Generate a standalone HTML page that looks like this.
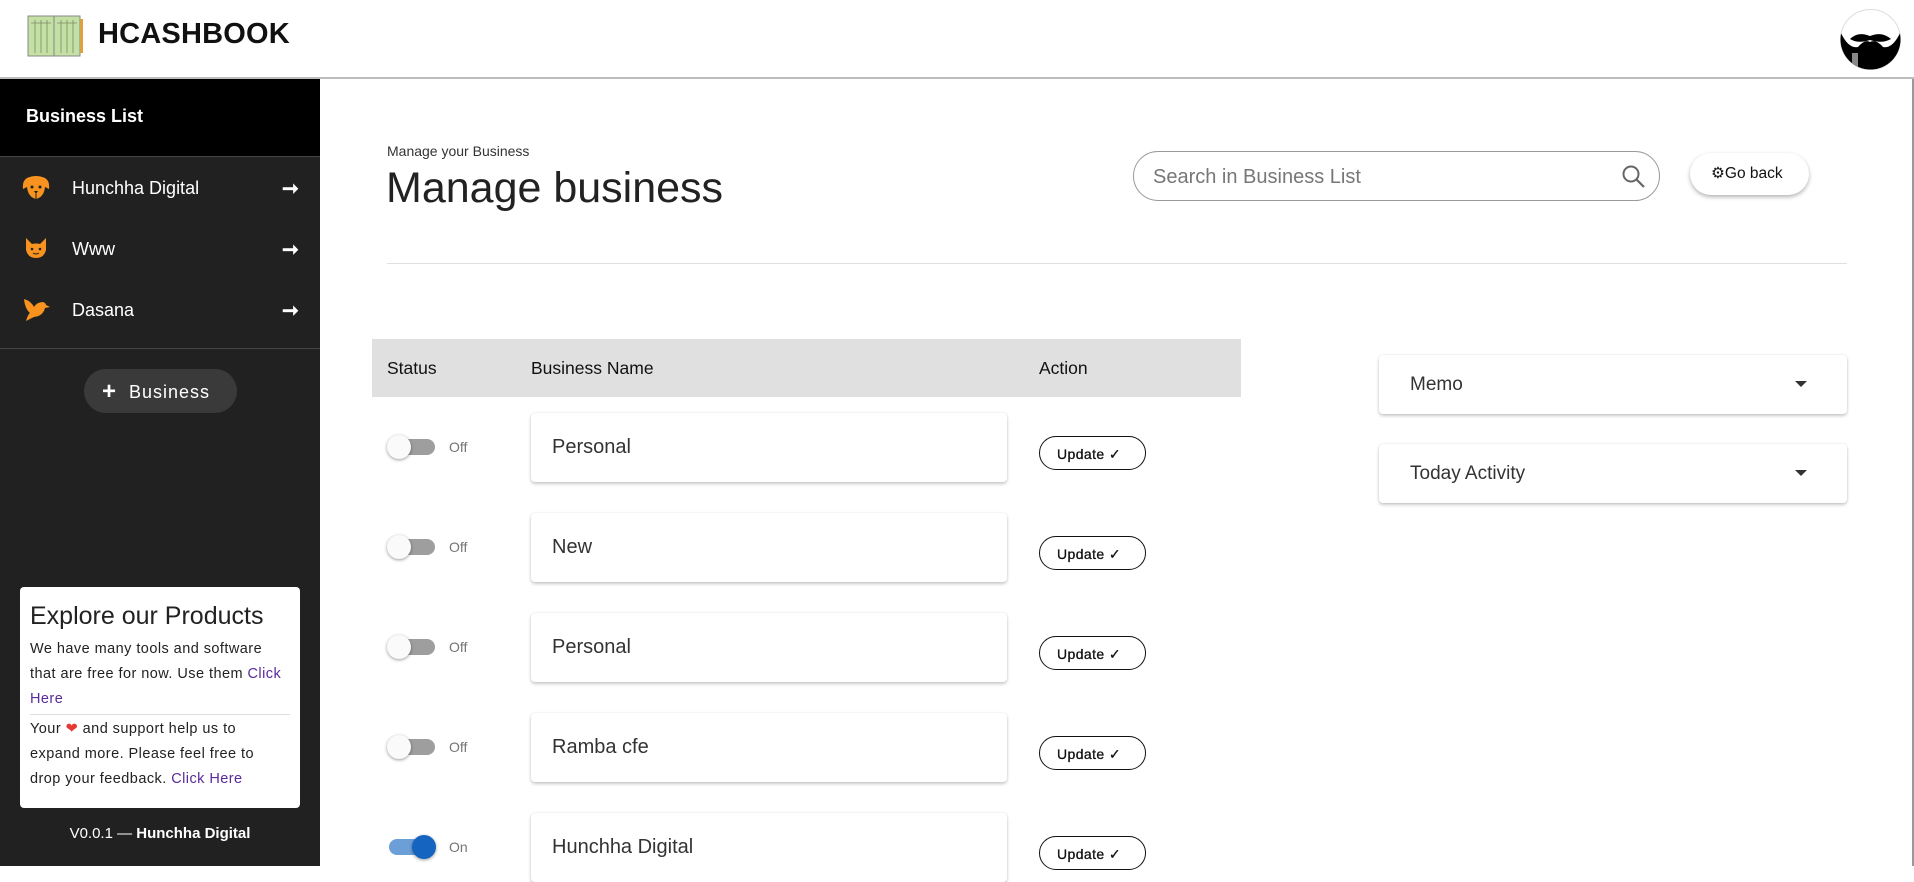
<!DOCTYPE html>
<html><head><meta charset="utf-8"><style>
*{box-sizing:border-box;margin:0;padding:0}
body{width:1914px;height:866px;overflow:hidden;font-family:"Liberation Sans",Arial,sans-serif;background:#fff;position:relative;color:#222}
.abs{position:absolute}
#hdr{left:0;top:0;width:1914px;height:79px;background:#fff;border-bottom:2px solid #bdbdbd}
#side{left:0;top:79px;width:320px;height:787px;background:#212121}
.item{position:absolute;left:0;width:320px;height:40px;color:#fff;font-size:18px}
.item .t{position:absolute;left:72px;top:10px}
.item .ar{position:absolute;left:282px;top:8px;font-size:20px;font-weight:bold}
.item .ic{position:absolute;left:22px;top:7px}
.row .tg{position:absolute;left:389px;width:46px;height:16px;border-radius:8px;background:#9e9e9e}
.row .th{position:absolute;width:24px;height:24px;border-radius:50%;background:#fafafa;box-shadow:0 1px 3px rgba(0,0,0,.4)}
.row .lb{position:absolute;left:449px;font-size:14px;color:#757575}
.row .bx{position:absolute;left:531px;width:476px;height:69px;background:#fff;border-radius:4px;box-shadow:0 2px 3px rgba(0,0,0,.2),0 0 2px rgba(0,0,0,.1);font-size:20px;color:#333;padding:23px 21px}
.row .up{position:absolute;left:1039px;width:107px;height:34px;border:1px solid #111;border-radius:17px;font-size:14px;color:#111;padding:9px 0 0 17px;letter-spacing:.4px;-webkit-text-stroke:.3px #111}
.card{position:absolute;left:1379px;width:468px;height:59px;background:#fff;border-radius:4px;box-shadow:0 2px 3px rgba(0,0,0,.2),0 0 2px rgba(0,0,0,.1);font-size:19px;color:#333;padding:19px 31px}
.card .c{position:absolute;right:40px;top:26px;width:0;height:0;border-left:6px solid transparent;border-right:6px solid transparent;border-top:6px solid #333}
.ex{font-size:14.5px;line-height:25px;letter-spacing:.45px;white-space:nowrap}
</style></head><body>
<div id="hdr" class="abs">
  <svg class="abs" style="left:27px;top:15px" width="57" height="42" viewBox="0 0 57 42">
    <rect x="1" y="1" width="26" height="40" fill="#c4e0a4" stroke="#888"/>
    <rect x="27" y="1" width="26" height="40" fill="#c4e0a4" stroke="#888"/>
    <rect x="53" y="4" width="3" height="34" fill="#e0a040"/>
    <g stroke="#7a8a6a" stroke-width=".8"><line x1="4" y1="8" x2="24" y2="8"/><line x1="30" y1="8" x2="50" y2="8"/><line x1="8" y1="5" x2="8" y2="38"/><line x1="14" y1="5" x2="14" y2="38"/><line x1="20" y1="5" x2="20" y2="38"/><line x1="34" y1="5" x2="34" y2="38"/><line x1="40" y1="5" x2="40" y2="38"/><line x1="46" y1="5" x2="46" y2="38"/></g>
  </svg>
  <div class="abs" style="left:98px;top:18px;font-size:29px;font-weight:900;color:#111;letter-spacing:0.2px">HCASHBOOK</div>
  <svg class="abs" style="left:1840px;top:9px" width="61" height="61" viewBox="0 0 61 61">
    <defs><clipPath id="cc"><circle cx="30.5" cy="30.5" r="30"/></clipPath></defs>
    <circle cx="30.5" cy="30.5" r="30" fill="#fff" stroke="#ddd"/>
    <g clip-path="url(#cc)">
      <path d="M0 22 Q8 40 18 38 Q25 30 30 33 Q36 30 43 38 Q53 40 61 22 L61 61 L0 61Z" fill="#000"/>
      <path d="M10 30 Q18 22 30 27 Q42 22 51 30 Q42 35 30 31 Q18 35 10 30Z" fill="#000"/>
      <rect x="12" y="44" width="6" height="17" fill="#888"/>
    </g>
  </svg>
</div>

<div id="side" class="abs">
  <div class="abs" style="left:0;top:0;width:320px;height:78px;background:#000;border-bottom:1px solid #444"></div>
  <div class="abs" style="left:26px;top:27px;color:#fff;font-size:18px;font-weight:bold">Business List</div>
  <div class="item" style="top:89px"><svg class="ic" width="28" height="26" viewBox="0 0 28 26"><path d="M5 3 Q14 -1 23 3 Q28 6 27 14 L23 12 Q22 22 14 24 Q6 22 5 12 L1 14 Q0 6 5 3Z" fill="#f7931e"/><circle cx="10" cy="12" r="1.5" fill="#222"/><circle cx="18" cy="12" r="1.5" fill="#222"/><path d="M12 16 L16 16 L14 19Z" fill="#222"/><line x1="14" y1="19" x2="14" y2="24" stroke="#222"/></svg><span class="t">Hunchha Digital</span><span class="ar">➞</span></div>
  <div class="item" style="top:150px"><svg class="ic" style="left:23px" width="26" height="24" viewBox="0 0 26 24"><path d="M3 2 L9 8 Q13 7 17 8 L23 2 L23 14 Q21 22 13 22 Q5 22 3 14Z" fill="#f7931e"/><circle cx="9" cy="13" r="1.3" fill="#222"/><circle cx="17" cy="13" r="1.3" fill="#222"/><path d="M10 17 Q13 19 16 17" stroke="#222" fill="none"/></svg><span class="t">Www</span><span class="ar">➞</span></div>
  <div class="item" style="top:211px"><svg class="ic" style="left:23px" width="27" height="24" viewBox="0 0 27 24"><path d="M1 2 Q8 4 11 10 Q14 5 20 5 Q23 6 23 8 L27 10 L22 11 Q20 19 11 20 L3 24 Q5 17 7 16 Q2 12 1 2Z" fill="#f7931e"/></svg><span class="t">Dasana</span><span class="ar">➞</span></div>
  <div class="abs" style="left:0;top:269px;width:320px;height:1px;background:#444"></div>
  <div class="abs" style="left:84px;top:290px;width:153px;height:44px;border-radius:22px;background:#3a3a3a;color:#fff;font-size:18px;padding:8px 0 0 18px;letter-spacing:1px"><span style="font-size:24px;font-weight:bold;position:relative;top:1px">+</span>&nbsp;&nbsp;Business</div>
  <div class="abs" style="left:20px;top:508px;width:280px;height:221px;background:#fff;border-radius:4px;padding:14px 10px;color:#222">
    <div style="font-size:25px;line-height:30px">Explore our Products</div>
    <div class="ex" style="margin-top:6px">We have many tools and software<br>that are free for now. Use them <span style="color:#5a2a9a">Click</span><br><span style="color:#5a2a9a">Here</span></div>
    <div style="height:1px;background:#ddd;margin:2px 0 2px"></div>
    <div class="ex">Your <span style="color:#e53935">❤</span> and support help us to<br>expand more. Please feel free to<br>drop your feedback. <span style="color:#5a2a9a">Click Here</span></div>
  </div>
  <div class="abs" style="left:0;top:746px;width:320px;text-align:center;color:#fff;font-size:15px">V0.0.1 — <b>Hunchha Digital</b></div>
</div>

<div class="abs" style="left:387px;top:143px;font-size:14px;color:#333">Manage your Business</div>
<div class="abs" style="left:386px;top:164px;font-size:43px;color:#222">Manage business</div>
<div class="abs" style="left:1133px;top:151px;width:527px;height:50px;border:1px solid #999;border-radius:25px;padding:14px 19px;font-size:20px;color:#777">Search in Business List
  <svg class="abs" style="left:487px;top:12px" width="26" height="26" viewBox="0 0 26 26"><circle cx="10" cy="10" r="7.5" fill="none" stroke="#666" stroke-width="2"/><line x1="15.5" y1="15.5" x2="23" y2="23" stroke="#666" stroke-width="2.2"/></svg></div>
<div class="abs" style="left:1690px;top:153px;width:119px;height:42px;border-radius:21px;background:#fff;box-shadow:0 2px 4px rgba(0,0,0,.3);font-size:15.5px;color:#111;padding:11px 0 0 21px">⚙Go back</div>
<div class="abs" style="left:387px;top:263px;width:1460px;height:1px;background:#e0e0e0"></div>

<div class="abs" style="left:372px;top:339px;width:869px;height:58px;background:#e0e0e0;font-size:17.5px;color:#111">
  <span class="abs" style="left:15px;top:19px">Status</span><span class="abs" style="left:159px;top:19px">Business Name</span><span class="abs" style="left:667px;top:19px">Action</span>
</div>

<div class="row">
  <div class="tg" style="top:439px"></div><div class="th" style="left:387px;top:435px"></div><div class="lb" style="top:439px">Off</div>
  <div class="bx" style="top:413px">Personal</div><div class="up" style="top:436px">Update ✓</div>
</div>
<div class="row">
  <div class="tg" style="top:539px"></div><div class="th" style="left:387px;top:535px"></div><div class="lb" style="top:539px">Off</div>
  <div class="bx" style="top:513px">New</div><div class="up" style="top:536px">Update ✓</div>
</div>
<div class="row">
  <div class="tg" style="top:639px"></div><div class="th" style="left:387px;top:635px"></div><div class="lb" style="top:639px">Off</div>
  <div class="bx" style="top:613px">Personal</div><div class="up" style="top:636px">Update ✓</div>
</div>
<div class="row">
  <div class="tg" style="top:739px"></div><div class="th" style="left:387px;top:735px"></div><div class="lb" style="top:739px">Off</div>
  <div class="bx" style="top:713px">Ramba cfe</div><div class="up" style="top:736px">Update ✓</div>
</div>
<div class="row">
  <div class="tg" style="top:839px;background:#6c9fd8"></div><div class="th" style="left:412px;top:835px;background:#1565c0"></div><div class="lb" style="top:839px">On</div>
  <div class="bx" style="top:813px">Hunchha Digital</div><div class="up" style="top:836px">Update ✓</div>
</div>

<div class="card" style="top:355px">Memo<div class="c"></div></div>
<div class="card" style="top:444px">Today Activity<div class="c"></div></div>
<div class="abs" style="left:1912px;top:79px;width:2px;height:787px;background:#999"></div>
</body></html>
